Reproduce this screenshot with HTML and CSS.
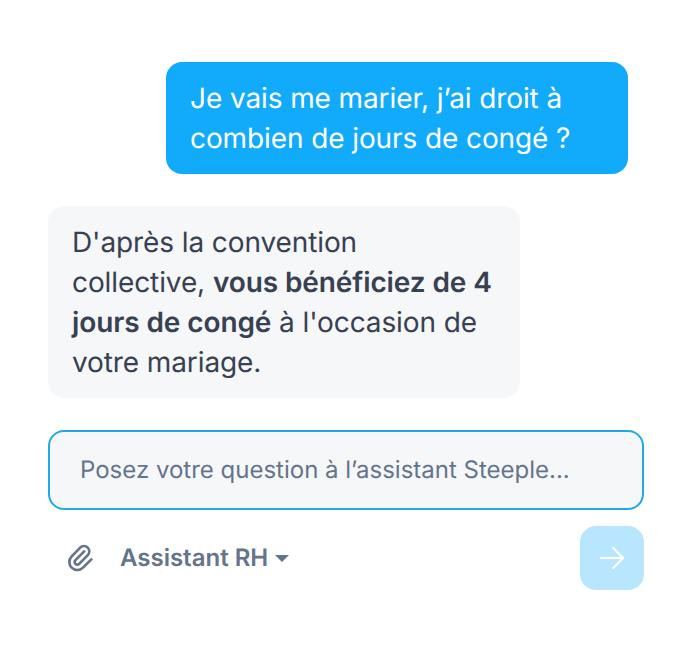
FILE: index.html
```html
<!DOCTYPE html>
<html lang="fr">
<head>
    <meta charset="UTF-8">
    <title>Assistant Steeple</title>
    <link rel="stylesheet" href="styles.css">
</head>
<body>
    <div class="chat">
        <div class="bubble bubble-user">Je vais me marier, j’ai droit à combien de jours de congé ?</div>
        <div class="bubble bubble-bot">D'après la convention collective, <strong>vous bénéficiez de 4 jours de congé</strong> à l'occasion de votre mariage.</div>
        <div class="prompt">Posez votre question à l’assistant Steeple...</div>
        <div class="toolbar">
            <svg class="clip" width="32" height="32" viewBox="0 0 24 24" fill="none" stroke="#64748b" stroke-width="2" stroke-linecap="round" stroke-linejoin="round">
                <path d="M15.172 7l-6.586 6.586a2 2 0 1 0 2.828 2.828l6.414-6.586a4 4 0 0 0-5.656-5.656l-6.415 6.585a6 6 0 1 0 8.486 8.486L20.5 13"/>
            </svg>
            <span class="picker">Assistant RH</span>
            <span class="caret"></span>
            <button class="send">
                <svg width="28" height="28" viewBox="0 0 24 24" fill="none" stroke="#fff" stroke-width="1.8" stroke-linecap="round" stroke-linejoin="round">
                    <path d="M2.5 12h19M13 3.5l8.5 8.5-8.5 8.5"/>
                </svg>
            </button>
        </div>
    </div>
</body>
</html>
```

FILE: styles.css
```css
body {
    margin: 0;
    background: #fff;
    font-family: Inter, sans-serif;
    -webkit-font-smoothing: antialiased;
    text-rendering: geometricPrecision;
}
.chat {
    display: flex;
    flex-direction: column;
    width: 596px;
    padding: 62px 48px 0;
}
.bubble {
    font-size: 28px;
    line-height: 40px;
    letter-spacing: -0.1px;
    padding: 16px 24px;
    border-radius: 16px;
    box-sizing: border-box;
}
.bubble strong {
    font-weight: 600;
}
.bubble-user {
    align-self: flex-end;
    width: 462px;
    margin-right: 16px;
    background: #12abfb;
    color: #fff;
}
.bubble-bot {
    align-self: flex-start;
    width: 472px;
    margin-top: 32px;
    background: #f5f7f9;
    color: #374151;
}
.prompt {
    margin-top: 32px;
    height: 80px;
    box-sizing: border-box;
    padding: 0 30px 2px;
    display: flex;
    align-items: center;
    font-size: 24px;
    color: #64748b;
    background: #f5f7f9;
    border: 2px solid #1fa9e6;
    border-radius: 16px;
}
.toolbar {
    display: flex;
    align-items: center;
    margin-top: 16px;
    height: 64px;
}
.clip {
    margin-left: 16px;
}
.picker {
    margin-left: 24px;
    padding-bottom: 2px;
    font-size: 24px;
    font-weight: 600;
    color: #64748b;
}
.caret {
    margin-left: 7px;
    border-left: 7px solid transparent;
    border-right: 7px solid transparent;
    border-top: 7px solid #64748b;
}
.send {
    margin-left: auto;
    width: 64px;
    height: 64px;
    display: flex;
    align-items: center;
    justify-content: center;
    padding: 0;
    border: none;
    border-radius: 16px;
    background: #b8e6fe;
}
```
